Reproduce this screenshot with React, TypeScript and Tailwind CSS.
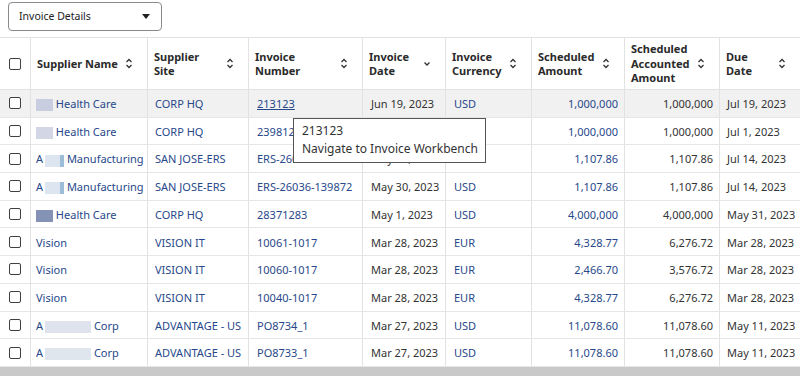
import React from "react";

type Row = {
  name: React.ReactNode;
  site: string;
  inv: string;
  date: string;
  cur: string;
  amt: string;
  acc: string;
  due: string;
  active?: boolean;
};

const Blk = ({ w, c }: { w: number; c: string }) => (
  <span className="inline-block h-[12px] align-middle" style={{ width: w, background: c }} />
);

const rows: Row[] = [
  {
    name: (
      <>
        <Blk w={17} c="#c9cde0" /> Health Care
      </>
    ),
    site: "CORP HQ",
    inv: "213123",
    date: "Jun 19, 2023",
    cur: "USD",
    amt: "1,000,000",
    acc: "1,000,000",
    due: "Jul 19, 2023",
    active: true,
  },
  {
    name: (
      <>
        <Blk w={17} c="#d3d6e4" /> Health Care
      </>
    ),
    site: "CORP HQ",
    inv: "23981234",
    date: "Jun 1, 2023",
    cur: "USD",
    amt: "1,000,000",
    acc: "1,000,000",
    due: "Jul 1, 2023",
  },
  {
    name: (
      <>
        A<span className="ml-[2px]" />
        <Blk w={15} c="#dde6f0" />
        <Blk w={4} c="#9dbcd8" /> Manufacturing
      </>
    ),
    site: "SAN JOSE-ERS",
    inv: "ERS-26036-139874",
    date: "May 30, 2023",
    cur: "USD",
    amt: "1,107.86",
    acc: "1,107.86",
    due: "Jul 14, 2023",
  },
  {
    name: (
      <>
        A<span className="ml-[2px]" />
        <Blk w={15} c="#dde6f0" />
        <Blk w={4} c="#9dbcd8" /> Manufacturing
      </>
    ),
    site: "SAN JOSE-ERS",
    inv: "ERS-26036-139872",
    date: "May 30, 2023",
    cur: "USD",
    amt: "1,107.86",
    acc: "1,107.86",
    due: "Jul 14, 2023",
  },
  {
    name: (
      <>
        <Blk w={17} c="#8492b6" /> Health Care
      </>
    ),
    site: "CORP HQ",
    inv: "28371283",
    date: "May 1, 2023",
    cur: "USD",
    amt: "4,000,000",
    acc: "4,000,000",
    due: "May 31, 2023",
  },
  { name: "Vision", site: "VISION IT", inv: "10061-1017", date: "Mar 28, 2023", cur: "EUR", amt: "4,328.77", acc: "6,276.72", due: "Mar 28, 2023" },
  { name: "Vision", site: "VISION IT", inv: "10060-1017", date: "Mar 28, 2023", cur: "EUR", amt: "2,466.70", acc: "3,576.72", due: "Mar 28, 2023" },
  { name: "Vision", site: "VISION IT", inv: "10040-1017", date: "Mar 28, 2023", cur: "EUR", amt: "4,328.77", acc: "6,276.72", due: "Mar 28, 2023" },
  {
    name: (
      <>
        A<span className="ml-[2px]" />
        <Blk w={46} c="#dfe3ee" /> Corp
      </>
    ),
    site: "ADVANTAGE - US",
    inv: "PO8734_1",
    date: "Mar 27, 2023",
    cur: "USD",
    amt: "11,078.60",
    acc: "11,078.60",
    due: "May 11, 2023",
  },
  {
    name: (
      <>
        A<span className="ml-[2px]" />
        <Blk w={46} c="#dfe6ee" /> Corp
      </>
    ),
    site: "ADVANTAGE - US",
    inv: "PO8733_1",
    date: "Mar 27, 2023",
    cur: "USD",
    amt: "11,078.60",
    acc: "11,078.60",
    due: "May 11, 2023",
  },
];

const SortIcon = ({ down }: { down?: boolean }) => (
  <svg width="8" height="11" viewBox="0 0 8 11" className="shrink-0">
    {!down && <path d="M1.5 4 L4 1.5 L6.5 4" fill="none" stroke="#333" strokeWidth="1.3" />}
    <path d={down ? "M1.5 4.5 L4 7 L6.5 4.5" : "M1.5 7 L4 9.5 L6.5 7"} fill="none" stroke="#333" strokeWidth="1.3" />
  </svg>
);

const Check = () => (
  <div className="w-[12px] h-[12px] rounded-[2px] border-[1.5px] border-[#404040] bg-white" />
);

const grid = "grid grid-cols-[30px_117px_101px_114px_83px_86px_93px_95px_81px]";
const cell = "flex items-center border-l border-[#e2e2e2] first:border-l-0";
const link = "text-[#27488a]";

const headers: { t: string[]; down?: boolean }[] = [
  { t: ["Supplier Name"] },
  { t: ["Supplier", "Site"] },
  { t: ["Invoice", "Number"] },
  { t: ["Invoice", "Date"], down: true },
  { t: ["Invoice", "Currency"] },
  { t: ["Scheduled", "Amount"] },
  { t: ["Scheduled", "Accounted", "Amount"] },
  { t: ["Due", "Date"] },
];

export default function App() {
  return (
    <div
      className="relative w-[800px] h-[376px] bg-white overflow-hidden text-[11px] text-[#333]"
      style={{ fontFamily: '"Noto Sans", Arial, sans-serif' }}
    >
      <div className="h-[37px] pl-[8px] pt-[2px]">
        <div className="w-[154px] h-[29px] border border-[#8a8a8a] rounded-[4px] flex items-center justify-between pl-[10px] pr-[11px]">
          <span className="text-[10.5px] text-[#222]">Invoice Details</span>
          <svg width="8" height="5" viewBox="0 0 8 5">
            <path d="M0 0 H8 L4 5 Z" fill="#222" />
          </svg>
        </div>
      </div>

      <div className={`${grid} h-[53px] border-t border-b border-[#e2e2e2]`}>
        <div className={`${cell} justify-center`}>
          <Check />
        </div>
        {headers.map((h, i) => (
          <div key={i} className={`${cell} justify-between pl-[6px] pr-[14px] font-bold text-[11px] leading-[14.5px] text-[#2a2a2a]`}>
            <div className="pt-[1px]">
              {h.t.map((l) => (
                <div key={l}>{l}</div>
              ))}
            </div>
            <SortIcon down={h.down} />
          </div>
        ))}
      </div>

      {rows.map((r, i) => (
        <div key={i} className={`${grid} h-[27.7px] border-b border-[#e6e6e6] ${r.active ? "bg-[#f1f1f1]" : ""}`}>
          <div className={`${cell} justify-center`}>
            <Check />
          </div>
          <div className={`${cell} pl-[5px] pt-[2px] whitespace-nowrap ${link}`}>
            <span>{r.name}</span>
          </div>
          <div className={`${cell} pl-[7px] pt-[2px] whitespace-nowrap ${link}`}>{r.site}</div>
          <div className={`${cell} pl-[8px] pt-[2px] whitespace-nowrap ${link}`}>
            <span className={r.active ? "underline" : ""}>{r.inv}</span>
          </div>
          <div className={`${cell} pl-[8px] pt-[2px] whitespace-nowrap`}>{r.date}</div>
          <div className={`${cell} pl-[8px] pt-[2px] ${link}`}>{r.cur}</div>
          <div className={`${cell} justify-end pr-[6px] pt-[2px] ${link}`}>{r.amt}</div>
          <div className={`${cell} justify-end pr-[6px] pt-[2px]`}>{r.acc}</div>
          <div className={`${cell} pl-[7px] pt-[2px] whitespace-nowrap`}>{r.due}</div>
        </div>
      ))}

      <div className="h-[10px] bg-[#c9c9c9]" />

      <div
        className="absolute left-[293px] top-[118px] w-[193px] h-[45px] border border-[#555] bg-white pl-[8px] pt-[3px] text-[12px] leading-[18px] text-[#333]"
        style={{ fontFamily: '"Noto Sans", sans-serif' }}
      >
        <div>213123</div>
        <div className="whitespace-nowrap">Navigate to Invoice Workbench</div>
      </div>
    </div>
  );
}
